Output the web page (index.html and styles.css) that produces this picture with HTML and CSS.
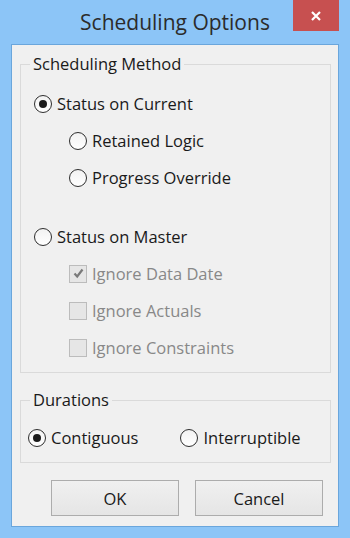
FILE: index.html
```html
<!DOCTYPE html>
<html lang="en">
<head>
    <meta charset="UTF-8">
    <title>Scheduling Options</title>
    <link rel="stylesheet" href="styles.css">
</head>
<body>
    <div class="window">
        <div class="titlebar">
            <span></span>
            <h1 class="title">Scheduling Options</h1>
            <button class="close" aria-label="Close">
                <svg width="12" height="12" viewBox="0 0 12 12">
                    <path d="M2 2 L10 10 M10 2 L2 10" stroke="#fff" stroke-width="2.2" fill="none"/>
                </svg>
            </button>
        </div>

        <div class="client">
            <fieldset class="group method">
                <legend>Scheduling Method</legend>
                <label class="option"><span class="radio checked"></span>Status on Current</label>
                <label class="option sub"><span class="radio"></span>Retained Logic</label>
                <label class="option sub"><span class="radio"></span>Progress Override</label>
                <label class="option master"><span class="radio"></span>Status on Master</label>
                <label class="option sub disabled">
                    <span class="check">
                        <svg width="13" height="13" viewBox="0 0 13 13">
                            <path d="M2.5 6.5 L5.2 9.5 L10.5 2.5" stroke="#7a7a7a" stroke-width="2.2" fill="none"/>
                        </svg>
                    </span>Ignore Data Date
                </label>
                <label class="option sub disabled"><span class="check"></span>Ignore Actuals</label>
                <label class="option sub disabled"><span class="check"></span>Ignore Constraints</label>
            </fieldset>

            <fieldset class="group durations">
                <legend>Durations</legend>
                <div class="inline-options">
                    <label class="option"><span class="radio checked"></span>Contiguous</label>
                    <label class="option"><span class="radio"></span>Interruptible</label>
                </div>
            </fieldset>

            <div class="buttons">
                <button class="btn">OK</button>
                <button class="btn">Cancel</button>
            </div>
        </div>
    </div>
</body>
</html>
```

FILE: styles.css
```css
:root {
    --frame-color: #8cc5f7;
    --frame-line: #6aa6dc;
    --client-bg: #f0f0f0;
    --group-line: #dadada;
    --text-color: #1a1a1a;
    --disabled-text: #888888;
}

* {
    margin: 0;
    padding: 0;
    box-sizing: border-box;
}

body {
    font-family: 'Open Sans', 'Noto Sans', sans-serif;
    color: var(--text-color);
    background-color: var(--frame-color);
}

.window {
    width: 350px;
    height: 538px;
    display: flex;
    flex-direction: column;
    background-color: var(--frame-color);
}

.titlebar {
    height: 44px;
    display: grid;
    grid-template-columns: 1fr auto 1fr;
    align-items: start;
}

.title {
    font-size: 21px;
    font-weight: 400;
    line-height: 44px;
    color: #2b2b2b;
}

.close {
    justify-self: end;
    margin-right: 11px;
    width: 46px;
    height: 31px;
    border: none;
    background-color: #c75050;
    display: flex;
    align-items: center;
    justify-content: center;
}

.client {
    flex: 1;
    margin: 0 11px 11px;
    border: 1px solid var(--frame-line);
    background-color: var(--client-bg);
    padding: 0 7px 0 8px;
    font-size: 16.5px;
}

.group {
    border: 1px solid var(--group-line);
    margin-top: 8px;
}

.group legend {
    padding: 0 3px;
    line-height: 22px;
}

.method {
    padding: 10px 13px 6px;
}

.method legend {
    margin-left: -4px;
}

.durations {
    margin-top: 16px;
    padding: 8px 7px 6px;
}

.durations legend {
    margin-left: 2px;
}

.option {
    height: 37px;
    display: flex;
    align-items: center;
    gap: 5px;
    white-space: nowrap;
}

.option.sub {
    padding-left: 35px;
}

.option.master {
    margin-top: 22px;
}

.option.disabled {
    color: var(--disabled-text);
}

.radio {
    width: 18px;
    height: 18px;
    border: 1px solid #2e2e2e;
    border-radius: 50%;
    background: linear-gradient(#f2f2f2, #ffffff);
    display: flex;
    align-items: center;
    justify-content: center;
    flex-shrink: 0;
}

.radio.checked::after {
    content: '';
    width: 8px;
    height: 8px;
    border-radius: 50%;
    background-color: #1a1a1a;
}

.check {
    width: 18px;
    height: 18px;
    border: 1px solid #bcbcbc;
    background-color: #e6e6e6;
    display: flex;
    align-items: center;
    justify-content: center;
    flex-shrink: 0;
}

.inline-options {
    display: flex;
    gap: 42px;
}

.buttons {
    margin-top: 17px;
    display: flex;
    justify-content: flex-end;
    gap: 16px;
    padding-right: 8px;
}

.btn {
    width: 128px;
    height: 36px;
    border: 1px solid #acacac;
    background: linear-gradient(#f0f0f0, #e5e5e5);
    font-family: inherit;
    font-size: 16.5px;
    color: var(--text-color);
}
```
